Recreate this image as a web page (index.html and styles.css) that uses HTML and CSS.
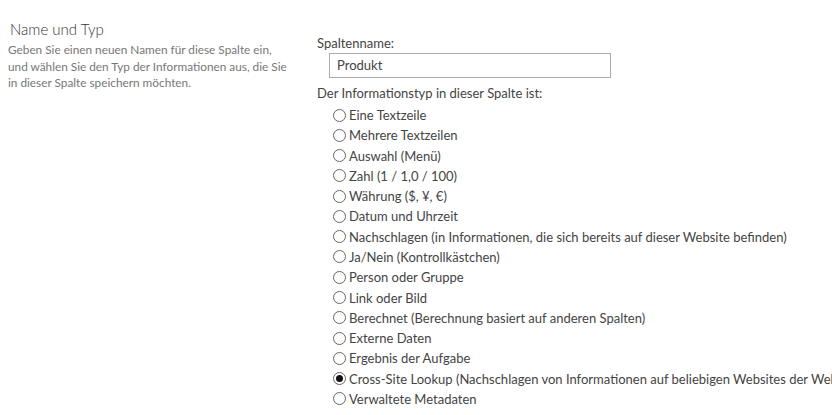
FILE: index.html
```html
<!DOCTYPE html>
<html lang="de">
<head>
<meta charset="utf-8">
<title>Name und Typ</title>
<link rel="stylesheet" href="styles.css">
</head>
<body>
<div class="section">
  <div class="left">
    <h3 class="heading">Name und Typ</h3>
    <p class="desc">Geben Sie einen neuen Namen für diese Spalte ein,<br>und wählen Sie den Typ der Informationen aus, die Sie<br>in dieser Spalte speichern möchten.</p>
  </div>
  <div class="right">
    <div class="label">Spaltenname:</div>
    <div class="field"><span class="input">Produkt</span></div>
    <div class="label label2">Der Informationstyp in dieser Spalte ist:</div>
    <ul class="options">
      <li class="opt"><span class="radio"></span>Eine Textzeile</li>
      <li class="opt"><span class="radio"></span>Mehrere Textzeilen</li>
      <li class="opt"><span class="radio"></span>Auswahl (Menü)</li>
      <li class="opt"><span class="radio"></span>Zahl (1 / 1,0 / 100)</li>
      <li class="opt"><span class="radio"></span>Währung ($, ¥, €)</li>
      <li class="opt"><span class="radio"></span>Datum und Uhrzeit</li>
      <li class="opt"><span class="radio"></span>Nachschlagen (in Informationen, die sich bereits auf dieser Website befinden)</li>
      <li class="opt"><span class="radio"></span>Ja/Nein (Kontrollkästchen)</li>
      <li class="opt"><span class="radio"></span>Person oder Gruppe</li>
      <li class="opt"><span class="radio"></span>Link oder Bild</li>
      <li class="opt"><span class="radio"></span>Berechnet (Berechnung basiert auf anderen Spalten)</li>
      <li class="opt"><span class="radio"></span>Externe Daten</li>
      <li class="opt"><span class="radio"></span>Ergebnis der Aufgabe</li>
      <li class="opt"><span class="radio checked"></span><span class="clip">Cross-Site Lookup (Nachschlagen von Informationen auf beliebigen Websites der Websitesammlung)</span></li>
      <li class="opt"><span class="radio"></span>Verwaltete Metadaten</li>
    </ul>
  </div>
</div>
</body>
</html>
```
FILE: styles.css
```css
html, body {
  margin: 0;
  padding: 0;
  background: #ffffff;
  overflow: hidden;
}
body {
  font-family: Lato, "Open Sans", sans-serif;
  color: #444444;
  width: 832px;
  height: 415px;
}
.section {
  display: flex;
  align-items: flex-start;
}
.left {
  width: 307px;
  flex: none;
  padding-left: 10px;
  padding-top: 19px;
}
.heading {
  margin: 0;
  font-weight: 300;
  font-size: 15px;
  line-height: 20px;
  color: #333333;
}
.desc {
  margin: 3px 0 0 -2px;
  font-size: 11.8px;
  line-height: 16.5px;
  color: #777777;
}
.right {
  flex: 1;
  padding-top: 34px;
  white-space: nowrap;
  min-width: 0;
  overflow: hidden;
}
.label {
  font-size: 13px;
  line-height: 18px;
}
.label2 {
  margin-top: 6px;
}
.field {
  margin-top: 1px;
  padding-left: 12px;
}
.input {
  display: block;
  box-sizing: border-box;
  width: 282px;
  height: 25px;
  border: 1px solid #ababab;
  padding: 0 7px;
  font-size: 13px;
  line-height: 23px;
  color: #444444;
}
.options {
  list-style: none;
  margin: 3px 0 0 0;
  padding: 0 0 0 16px;
}
.opt {
  display: flex;
  align-items: center;
  height: 20.27px;
  font-size: 13px;
}
.clip {
  overflow: hidden;
  min-width: 0;
}
.radio {
  flex: none;
  box-sizing: border-box;
  width: 13px;
  height: 13px;
  border: 1px solid #666666;
  border-radius: 50%;
  margin-right: 3px;
  display: flex;
  align-items: center;
  justify-content: center;
}
.radio.checked::after {
  content: "";
  width: 7px;
  height: 7px;
  border-radius: 50%;
  background: #111111;
}
```
